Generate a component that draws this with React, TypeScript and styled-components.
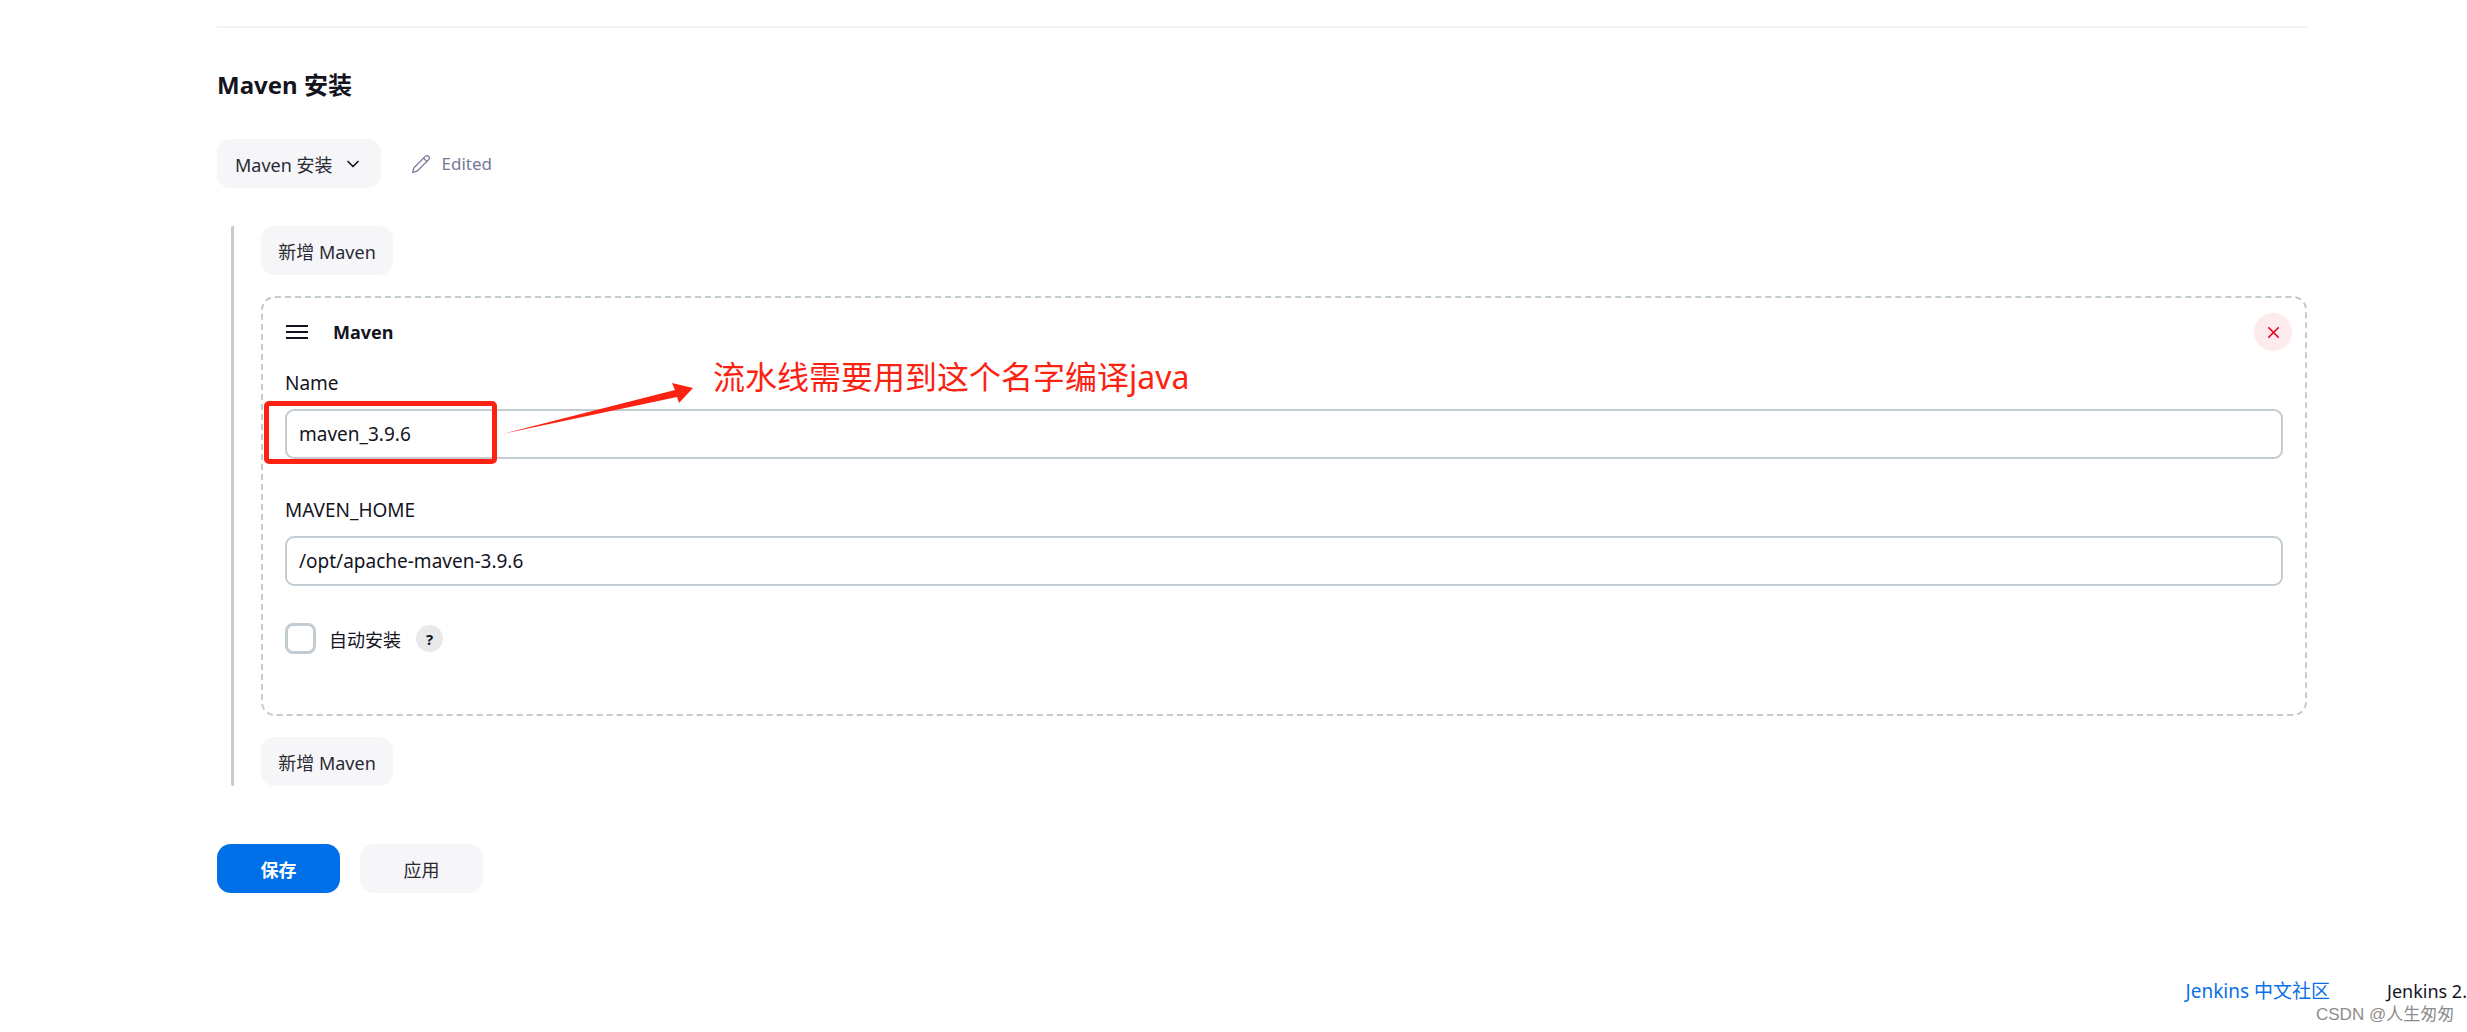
import React from 'react';
import styled, { createGlobalStyle } from 'styled-components';
import { ChevronDown, Pencil, X } from 'lucide-react';

const GlobalStyle = createGlobalStyle`
    html, body {
        margin: 0;
        padding: 0;
        background: #fff;
    }

    * {
        box-sizing: border-box;
    }
`;

const Page = styled.div`
    position: relative;
    width: 2467px;
    height: 1032px;
    overflow: hidden;
    padding: 26px 0 0 217px;
    font-family: "Noto Sans", "Noto Sans CJK SC", sans-serif;
    font-size: 18px;
    color: #14141f;
    background: #fff;
`;

const Main = styled.div`
    width: 2090px;
`;

const Rule = styled.div`
    height: 2px;
    background: #f3f3f6;
`;

const Title = styled.h2`
    margin: 39px 0 0;
    height: 36px;
    font-size: 24px;
    line-height: 36px;
    font-weight: 700;
`;

const Toolbar = styled.div`
    display: flex;
    align-items: center;
    gap: 30px;
    margin-top: 36px;
`;

const Button = styled.div<{ $w?: number }>`
    display: flex;
    align-items: center;
    justify-content: center;
    gap: 10px;
    width: ${props => props.$w ? `${props.$w}px` : 'auto'};
    height: 49px;
    padding: ${props => props.$w ? '0' : '0 18px'};
    border-radius: 14px;
    font-size: 18px;
    white-space: nowrap;
    background: #f6f6f8;
    color: #2a2a35;
`;

const PrimaryButton = styled(Button)`
    font-weight: 700;
    color: #fff;
    background: #0070e8;
`;

const EditedNote = styled.div`
    display: flex;
    align-items: center;
    gap: 11px;
    font-size: 17px;
    color: #77779a;
`;

const Repeatable = styled.div`
    display: flex;
    flex-direction: column;
    gap: 21px;
    margin: 38px 0 0 14px;
    padding-left: 27px;
    border-left: 3px solid #c3ccd1;
    border-radius: 2px;
`;

const Card = styled.div`
    display: flex;
    flex-direction: column;
    height: 420px;
    padding: 0 22px 0 22px;
    border: 2px dashed #c3ccd1;
    border-radius: 14px;
`;

const CardHead = styled.div`
    display: flex;
    align-items: center;
    justify-content: space-between;
    height: 72px;
    padding-bottom: 4px;
`;

const CardTitle = styled.div`
    display: flex;
    align-items: center;
    gap: 25px;
    font-weight: 700;
    font-size: 18px;
`;

const Handle = styled.span`
    display: flex;
    flex-direction: column;
    gap: 4px;
    width: 22px;
    margin-left: 1px;

    i {
        display: block;
        height: 2px;
        background: #14141f;
    }
`;

const CloseButton = styled.div`
    display: flex;
    align-items: center;
    justify-content: center;
    width: 38px;
    height: 38px;
    margin-right: -9px;
    border-radius: 50%;
    color: #e6001f;
    background: #fdeaec;
`;

const Field = styled.div`
    display: flex;
    flex-direction: column;
    margin-bottom: 38px;
`;

const Label = styled.label`
    height: 27px;
    margin-bottom: 12px;
    line-height: 27px;
    font-size: 19px;
`;

const TextBox = styled.div`
    display: flex;
    align-items: center;
    height: 50px;
    padding: 0 12px;
    border: 2px solid #c3ccd1;
    border-radius: 9px;
    font-size: 19px;
`;

const CheckRow = styled.div`
    display: flex;
    align-items: center;
    margin-top: -1px;
`;

const CheckBox = styled.span`
    width: 31px;
    height: 31px;
    margin-right: 13px;
    border: 3px solid #c3ccd1;
    border-radius: 8px;
`;

const HelpBadge = styled.span`
    display: flex;
    align-items: center;
    justify-content: center;
    width: 27px;
    height: 27px;
    margin-left: 15px;
    border-radius: 50%;
    font-size: 15px;
    font-weight: 700;
    background: #e9e9ec;
`;

const Actions = styled.div`
    display: flex;
    gap: 20px;
    margin-top: 58px;
`;

const Footer = styled.div`
    display: flex;
    justify-content: flex-end;
    gap: 57px;
    position: absolute;
    top: 978px;
    right: 0;
    line-height: 27px;
    white-space: nowrap;
`;

const FooterLink = styled.a`
    font-size: 19px;
    color: #0b70e6;
`;

const Watermark = styled.div`
    position: absolute;
    left: 2316px;
    top: 1004px;
    font-family: "Liberation Sans", "Noto Sans CJK SC", sans-serif;
    font-size: 17px;
    line-height: 22px;
    color: #8d8d8d;
    white-space: nowrap;
`;

const RedFrame = styled.div`
    position: absolute;
    left: 264px;
    top: 401px;
    width: 233px;
    height: 63px;
    border: 5px solid #fb2212;
    border-radius: 5px;
`;

const ArrowMark = styled.svg`
    position: absolute;
    left: 500px;
    top: 375px;
`;

const Annotation = styled.div`
    position: absolute;
    left: 713px;
    top: 354px;
    font-size: 32px;
    line-height: 46px;
    color: #fb2212;
    white-space: nowrap;
`;

const App: React.FC = () => {
    return (
        <Page>
            <GlobalStyle />
            <Main>
                <Rule />
                <Title>Maven 安装</Title>
                <Toolbar>
                    <Button>
                        Maven 安装
                        <ChevronDown size={20} strokeWidth={2} color="#14141f" />
                    </Button>
                    <EditedNote>
                        <Pencil size={20} strokeWidth={1.5} />
                        Edited
                    </EditedNote>
                </Toolbar>
                <Repeatable>
                    <Button $w={132}>新增 Maven</Button>
                    <Card>
                        <CardHead>
                            <CardTitle>
                                <Handle><i /><i /><i /></Handle>
                                Maven
                            </CardTitle>
                            <CloseButton>
                                <X size={19} strokeWidth={2} />
                            </CloseButton>
                        </CardHead>
                        <Field>
                            <Label>Name</Label>
                            <TextBox>maven_3.9.6</TextBox>
                        </Field>
                        <Field>
                            <Label>MAVEN_HOME</Label>
                            <TextBox>/opt/apache-maven-3.9.6</TextBox>
                        </Field>
                        <CheckRow>
                            <CheckBox />
                            自动安装
                            <HelpBadge>?</HelpBadge>
                        </CheckRow>
                    </Card>
                    <Button $w={132}>新增 Maven</Button>
                </Repeatable>
                <Actions>
                    <PrimaryButton $w={123}>保存</PrimaryButton>
                    <Button $w={123}>应用</Button>
                </Actions>
            </Main>
            <RedFrame />
            <ArrowMark width="200" height="64" viewBox="0 0 200 64">
                <path d="M2 59 L175 15 L172 8 L193 13 L179 28 L177 22 Z" fill="#fb2212" />
            </ArrowMark>
            <Annotation>流水线需要用到这个名字编译java</Annotation>
            <Footer>
                <FooterLink>Jenkins 中文社区</FooterLink>
                <span>Jenkins 2.</span>
            </Footer>
            <Watermark>CSDN @人生匆匆</Watermark>
        </Page>
    );
};

export default App;
